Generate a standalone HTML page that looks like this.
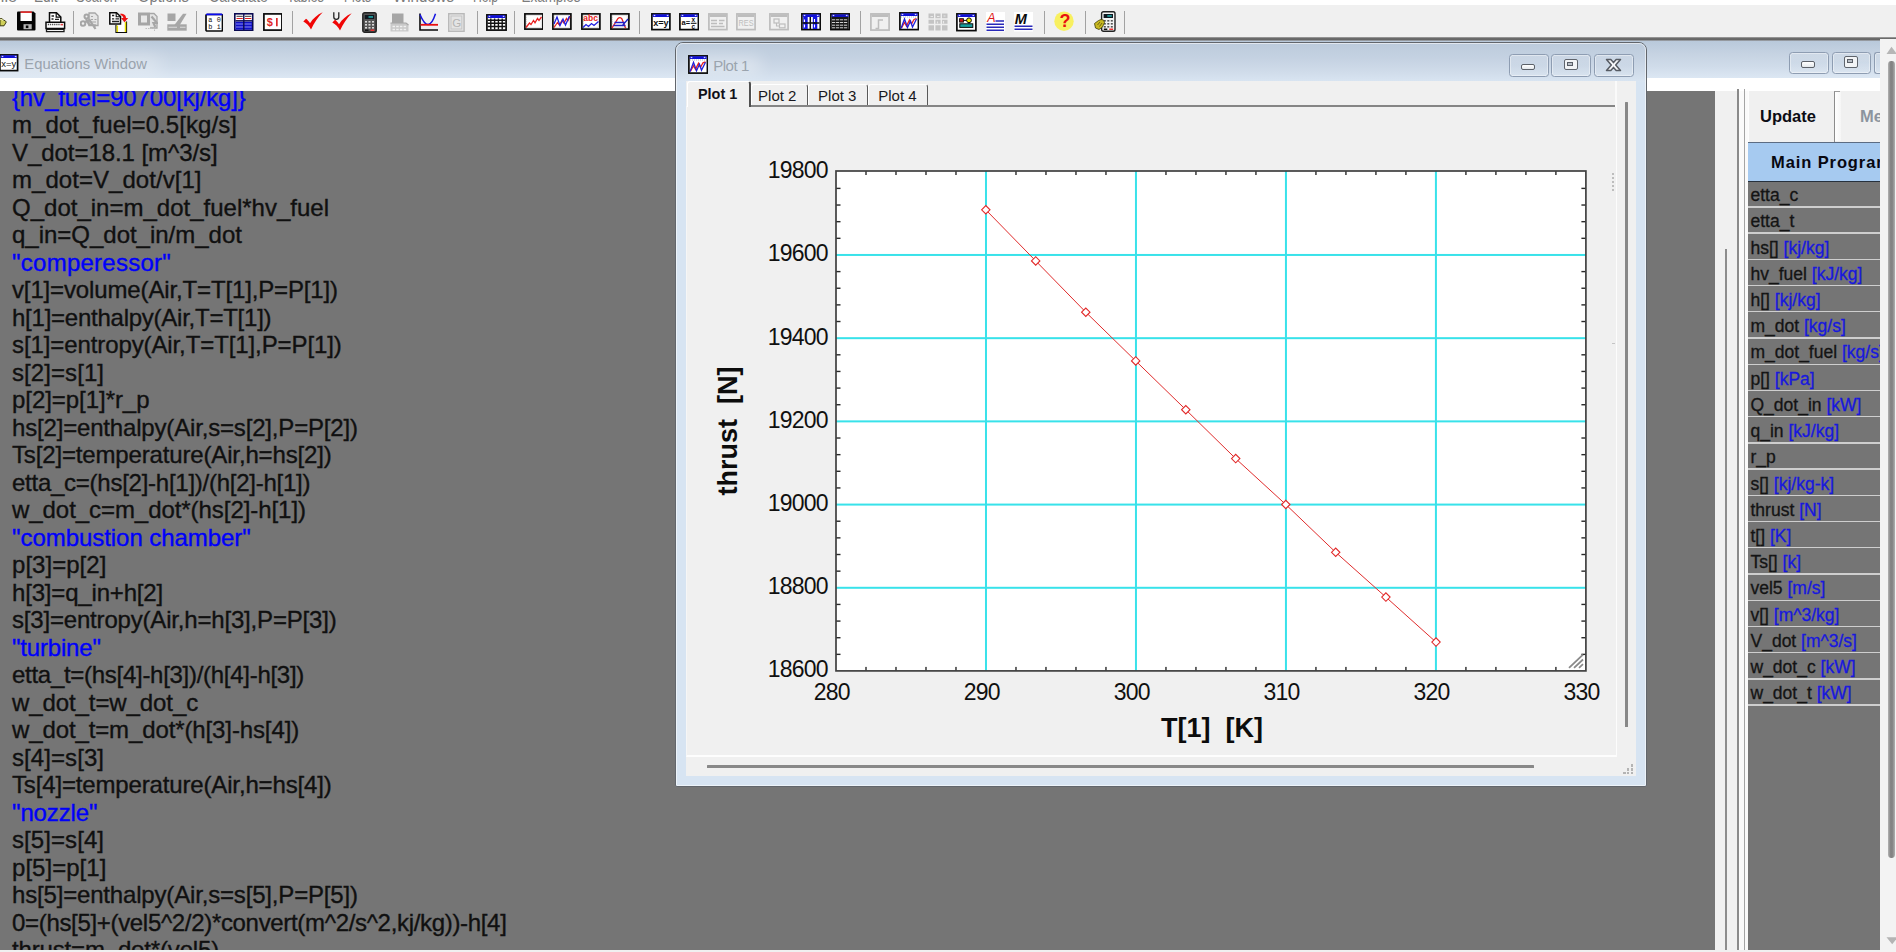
<!DOCTYPE html>
<html><head><meta charset="utf-8"><title>EES</title>
<style>
*{box-sizing:border-box;margin:0;padding:0}
html,body{width:1896px;height:952px;overflow:hidden;background:#757575;font-family:"Liberation Sans",sans-serif;}
.abs{position:absolute}
#menu{left:0;top:0;width:1896px;height:6px;background:#fff;overflow:hidden}
#menu span{position:absolute;top:-14.2px;font-size:17.5px;line-height:18px;color:#6a6a6a;white-space:nowrap;display:block;text-align:justify;text-align-last:justify}
#tb{left:0;top:5px;width:1896px;height:33px;background:#f0f0f0}
#tbline{left:0;top:37px;width:1896px;height:4px;background:linear-gradient(#a8a8a8,#5e5e5e 45%,#6a6a6a 70%,#b4bcc6)}
.sep{position:absolute;top:5px;width:2px;height:24px;border-left:1px solid #a0a0a0;border-right:1px solid #fff}
.ic{position:absolute;top:6px;width:22px;height:22px}
#eqtitle{left:0;top:41px;width:1881px;height:37px;background:linear-gradient(#b9c9db 0%,#c6d3e2 35%,#d0dcea 70%,#dce7f3 100%)}
#eqtitle .t{position:absolute;left:24.3px;top:12.2px;font-size:14.8px;color:#9aa3ad;line-height:22px;white-space:nowrap}
#white{left:0;top:77.5px;width:1881px;height:13px;background:#fff}
#eq{left:0;top:90.5px;width:1715px;height:859.1px;background:#757575;overflow:hidden}
#eqtext{position:absolute;left:12px;top:-7px;font-size:24px;line-height:27.5px;color:#101010;white-space:pre;-webkit-text-stroke:0.35px}
#eqtext .c{color:#0000fa}
#bottom{left:0;top:949.6px;width:1896px;height:3px;background:#f0f0f0}
.wbtn{position:absolute;width:39.6px;height:22px;border:1.2px solid #8e9db2;border-radius:3.5px;background:linear-gradient(rgba(255,255,255,.14),rgba(255,255,255,.02) 50%,rgba(255,255,255,.1));box-shadow:inset 0 0 0 1px rgba(255,255,255,.4)}
</style></head><body>
<div id="menu" class="abs"><svg class="abs" style="left:0;top:0" width="640" height="6" viewBox="0 0 640 6"><text x="-9" y="1.5" font-size="16.5" font-family="Liberation Sans, sans-serif" fill="#7c7c7c" textLength="26" lengthAdjust="spacingAndGlyphs">File</text><text x="34" y="1.5" font-size="16.5" font-family="Liberation Sans, sans-serif" fill="#7c7c7c" textLength="23.5" lengthAdjust="spacingAndGlyphs">Edit</text><text x="76" y="1.5" font-size="16.5" font-family="Liberation Sans, sans-serif" fill="#7c7c7c" textLength="41" lengthAdjust="spacingAndGlyphs">Search</text><text x="138" y="1.5" font-size="16.5" font-family="Liberation Sans, sans-serif" fill="#7c7c7c" textLength="51" lengthAdjust="spacingAndGlyphs">Options</text><text x="209" y="1.5" font-size="16.5" font-family="Liberation Sans, sans-serif" fill="#7c7c7c" textLength="59" lengthAdjust="spacingAndGlyphs">Calculate</text><text x="287" y="1.5" font-size="16.5" font-family="Liberation Sans, sans-serif" fill="#7c7c7c" textLength="37" lengthAdjust="spacingAndGlyphs">Tables</text><text x="344" y="1.5" font-size="16.5" font-family="Liberation Sans, sans-serif" fill="#7c7c7c" textLength="27" lengthAdjust="spacingAndGlyphs">Plots</text><text x="393" y="1.5" font-size="16.5" font-family="Liberation Sans, sans-serif" fill="#7c7c7c" textLength="61" lengthAdjust="spacingAndGlyphs">Windows</text><text x="473" y="1.5" font-size="16.5" font-family="Liberation Sans, sans-serif" fill="#7c7c7c" textLength="25" lengthAdjust="spacingAndGlyphs">Help</text><text x="521.5" y="1.5" font-size="16.5" font-family="Liberation Sans, sans-serif" fill="#7c7c7c" textLength="59" lengthAdjust="spacingAndGlyphs">Examples</text></svg></div><div id="tb" class="abs"></div><div id="tbline" class="abs"></div><div id="eqtitle" class="abs"><div class="abs" style="left:-30px;top:16px;width:190px;height:16px;background:rgba(255,255,255,.38);filter:blur(9px)"></div><div class="t">Equations Window</div></div><div id="white" class="abs"></div><div id="eq" class="abs"><div id="eqtext"><span class="c" style="letter-spacing:-0.144px">{hv_fuel=90700[kj/kg]}</span>
<span style="letter-spacing:0.081px">m_dot_fuel=0.5[kg/s]</span>
<span style="letter-spacing:-0.059px">V_dot=18.1 [m^3/s]</span>
<span style="letter-spacing:0.048px">m_dot=V_dot/v[1]</span>
<span style="letter-spacing:0.004px">Q_dot_in=m_dot_fuel*hv_fuel</span>
<span style="letter-spacing:-0.016px">q_in=Q_dot_in/m_dot</span>
<span class="c" style="letter-spacing:0.255px">"comperessor"</span>
<span style="letter-spacing:-0.140px">v[1]=volume(Air,T=T[1],P=P[1])</span>
<span style="letter-spacing:-0.246px">h[1]=enthalpy(Air,T=T[1])</span>
<span style="letter-spacing:-0.102px">s[1]=entropy(Air,T=T[1],P=P[1])</span>
<span style="letter-spacing:0.079px">s[2]=s[1]</span>
<span style="letter-spacing:-0.050px">p[2]=p[1]*r_p</span>
<span style="letter-spacing:-0.174px">hs[2]=enthalpy(Air,s=s[2],P=P[2])</span>
<span style="letter-spacing:-0.153px">Ts[2]=temperature(Air,h=hs[2])</span>
<span style="letter-spacing:-0.258px">etta_c=(hs[2]-h[1])/(h[2]-h[1])</span>
<span style="letter-spacing:-0.060px">w_dot_c=m_dot*(hs[2]-h[1])</span>
<span class="c" style="letter-spacing:-0.052px">"combustion chamber"</span>
<span style="letter-spacing:0.029px">p[3]=p[2]</span>
<span style="letter-spacing:-0.181px">h[3]=q_in+h[2]</span>
<span style="letter-spacing:-0.184px">s[3]=entropy(Air,h=h[3],P=P[3])</span>
<span class="c" style="letter-spacing:-0.188px">"turbine"</span>
<span style="letter-spacing:-0.284px">etta_t=(hs[4]-h[3])/(h[4]-h[3])</span>
<span style="letter-spacing:-0.095px">w_dot_t=w_dot_c</span>
<span style="letter-spacing:-0.119px">w_dot_t=m_dot*(h[3]-hs[4])</span>
<span style="letter-spacing:0.079px">s[4]=s[3]</span>
<span style="letter-spacing:-0.153px">Ts[4]=temperature(Air,h=hs[4])</span>
<span class="c" style="letter-spacing:-0.128px">"nozzle"</span>
<span style="letter-spacing:0.079px">s[5]=s[4]</span>
<span style="letter-spacing:0.029px">p[5]=p[1]</span>
<span style="letter-spacing:-0.174px">hs[5]=enthalpy(Air,s=s[5],P=P[5])</span>
<span style="letter-spacing:-0.323px">0=(hs[5]+(vel5^2/2)*convert(m^2/s^2,kj/kg))-h[4]</span>
<span style="letter-spacing:-0.161px">thrust=m_dot*(vel5)</span>
</div></div><div id="bottom" class="abs"></div><div class="abs" style="left:1715px;top:90.5px;width:33px;height:859.1px;background:#f0f0f0"></div><div class="abs" style="left:1739px;top:90.5px;width:9px;height:859.1px;background:#fafafa"></div><div class="abs" style="left:1736.7px;top:89px;width:2.3px;height:860.6px;background:#8a8a8a"></div><div class="abs" style="left:1744.2px;top:89px;width:1.2px;height:860.6px;background:#a4a4a4"></div><div class="abs" style="left:1725.2px;top:249px;width:2.3px;height:700.6px;background:#8c8c8c"></div><div class="abs" style="left:1748px;top:90.5px;width:132px;height:859.1px;background:#757575;overflow:hidden"><div class="abs" style="left:0;top:0;width:132px;height:51px;background:#f0f0f0;border-left:1.5px solid #fdfdfd"></div><div class="abs" style="left:86.7px;top:1.7px;width:6.5px;height:49.3px;background:linear-gradient(90deg,#fff,#f6f6f6)"></div><div class="abs" style="left:85.5px;top:0.5px;width:6px;height:51px;border-left:1.2px solid #8c8c8c;border-top:1.2px solid #9c9c9c"></div><div class="abs" style="left:12px;top:15px;font-size:16.5px;font-weight:bold;color:#0c0c14;line-height:20px">Update</div><div class="abs" style="left:112px;top:15px;font-size:16.5px;font-weight:bold;color:#8c949e;line-height:20px;white-space:nowrap">Menu</div><div class="abs" style="left:0;top:51px;width:132px;height:40px;background:#a6caf0;border-top:1.7px solid #5c6c82;border-bottom:1.7px solid #27313d"></div><div class="abs" style="left:23px;top:61px;font-size:16.5px;font-weight:bold;color:#080810;line-height:20px;white-space:nowrap;letter-spacing:0.9px">Main Program</div><div class="abs" style="left:2.5px;top:93.60px;font-size:17.5px;line-height:22px;color:#141414;white-space:nowrap;-webkit-text-stroke:0.3px">etta_c</div><div class="abs" style="left:0;top:115.70px;width:132px;height:1.4px;background:#cecece"></div><div class="abs" style="left:2.5px;top:119.82px;font-size:17.5px;line-height:22px;color:#141414;white-space:nowrap;-webkit-text-stroke:0.3px">etta_t</div><div class="abs" style="left:0;top:141.92px;width:132px;height:1.4px;background:#cecece"></div><div class="abs" style="left:2.5px;top:146.04px;font-size:17.5px;line-height:22px;color:#141414;white-space:nowrap;-webkit-text-stroke:0.3px">hs[] <span style="color:#1818de">[kj/kg]</span></div><div class="abs" style="left:0;top:168.14px;width:132px;height:1.4px;background:#cecece"></div><div class="abs" style="left:2.5px;top:172.26px;font-size:17.5px;line-height:22px;color:#141414;white-space:nowrap;-webkit-text-stroke:0.3px">hv_fuel <span style="color:#1818de">[kJ/kg]</span></div><div class="abs" style="left:0;top:194.36px;width:132px;height:1.4px;background:#cecece"></div><div class="abs" style="left:2.5px;top:198.48px;font-size:17.5px;line-height:22px;color:#141414;white-space:nowrap;-webkit-text-stroke:0.3px">h[] <span style="color:#1818de">[kj/kg]</span></div><div class="abs" style="left:0;top:220.58px;width:132px;height:1.4px;background:#cecece"></div><div class="abs" style="left:2.5px;top:224.70px;font-size:17.5px;line-height:22px;color:#141414;white-space:nowrap;-webkit-text-stroke:0.3px">m_dot <span style="color:#1818de">[kg/s]</span></div><div class="abs" style="left:0;top:246.80px;width:132px;height:1.4px;background:#cecece"></div><div class="abs" style="left:2.5px;top:250.92px;font-size:17.5px;line-height:22px;color:#141414;white-space:nowrap;-webkit-text-stroke:0.3px">m_dot_fuel <span style="color:#1818de">[kg/s]</span></div><div class="abs" style="left:0;top:273.02px;width:132px;height:1.4px;background:#cecece"></div><div class="abs" style="left:2.5px;top:277.14px;font-size:17.5px;line-height:22px;color:#141414;white-space:nowrap;-webkit-text-stroke:0.3px">p[] <span style="color:#1818de">[kPa]</span></div><div class="abs" style="left:0;top:299.24px;width:132px;height:1.4px;background:#cecece"></div><div class="abs" style="left:2.5px;top:303.36px;font-size:17.5px;line-height:22px;color:#141414;white-space:nowrap;-webkit-text-stroke:0.3px">Q_dot_in <span style="color:#1818de">[kW]</span></div><div class="abs" style="left:0;top:325.46px;width:132px;height:1.4px;background:#cecece"></div><div class="abs" style="left:2.5px;top:329.58px;font-size:17.5px;line-height:22px;color:#141414;white-space:nowrap;-webkit-text-stroke:0.3px">q_in <span style="color:#1818de">[kJ/kg]</span></div><div class="abs" style="left:0;top:351.68px;width:132px;height:1.4px;background:#cecece"></div><div class="abs" style="left:2.5px;top:355.80px;font-size:17.5px;line-height:22px;color:#141414;white-space:nowrap;-webkit-text-stroke:0.3px">r_p</div><div class="abs" style="left:0;top:377.90px;width:132px;height:1.4px;background:#cecece"></div><div class="abs" style="left:2.5px;top:382.02px;font-size:17.5px;line-height:22px;color:#141414;white-space:nowrap;-webkit-text-stroke:0.3px">s[] <span style="color:#1818de">[kj/kg-k]</span></div><div class="abs" style="left:0;top:404.12px;width:132px;height:1.4px;background:#cecece"></div><div class="abs" style="left:2.5px;top:408.24px;font-size:17.5px;line-height:22px;color:#141414;white-space:nowrap;-webkit-text-stroke:0.3px">thrust <span style="color:#1818de">[N]</span></div><div class="abs" style="left:0;top:430.34px;width:132px;height:1.4px;background:#cecece"></div><div class="abs" style="left:2.5px;top:434.46px;font-size:17.5px;line-height:22px;color:#141414;white-space:nowrap;-webkit-text-stroke:0.3px">t[] <span style="color:#1818de">[K]</span></div><div class="abs" style="left:0;top:456.56px;width:132px;height:1.4px;background:#cecece"></div><div class="abs" style="left:2.5px;top:460.68px;font-size:17.5px;line-height:22px;color:#141414;white-space:nowrap;-webkit-text-stroke:0.3px">Ts[] <span style="color:#1818de">[k]</span></div><div class="abs" style="left:0;top:482.78px;width:132px;height:1.4px;background:#cecece"></div><div class="abs" style="left:2.5px;top:486.90px;font-size:17.5px;line-height:22px;color:#141414;white-space:nowrap;-webkit-text-stroke:0.3px">vel5 <span style="color:#1818de">[m/s]</span></div><div class="abs" style="left:0;top:509.00px;width:132px;height:1.4px;background:#cecece"></div><div class="abs" style="left:2.5px;top:513.12px;font-size:17.5px;line-height:22px;color:#141414;white-space:nowrap;-webkit-text-stroke:0.3px">v[] <span style="color:#1818de">[m^3/kg]</span></div><div class="abs" style="left:0;top:535.22px;width:132px;height:1.4px;background:#cecece"></div><div class="abs" style="left:2.5px;top:539.34px;font-size:17.5px;line-height:22px;color:#141414;white-space:nowrap;-webkit-text-stroke:0.3px">V_dot <span style="color:#1818de">[m^3/s]</span></div><div class="abs" style="left:0;top:561.44px;width:132px;height:1.4px;background:#cecece"></div><div class="abs" style="left:2.5px;top:565.56px;font-size:17.5px;line-height:22px;color:#141414;white-space:nowrap;-webkit-text-stroke:0.3px">w_dot_c <span style="color:#1818de">[kW]</span></div><div class="abs" style="left:0;top:587.66px;width:132px;height:1.4px;background:#cecece"></div><div class="abs" style="left:2.5px;top:591.78px;font-size:17.5px;line-height:22px;color:#141414;white-space:nowrap;-webkit-text-stroke:0.3px">w_dot_t <span style="color:#1818de">[kW]</span></div><div class="abs" style="left:0;top:613.88px;width:132px;height:1.4px;background:#cecece"></div></div><div class="wbtn" style="left:1789.2px;top:52.2px;height:21.6px"><div class="abs" style="left:11.3px;top:8.0px;width:13.6px;height:6.4px;border:1.5px solid #5c6169;border-radius:2px;background:linear-gradient(#fff,#e4e8ec)"></div></div><div class="wbtn" style="left:1831.5px;top:52.2px;height:21.6px"><div class="abs" style="left:11.500px;top:3.0px;width:14px;height:11.400px;border:1.7px solid #5f646c;border-radius:2px;background:#f2f4f6"><div class="abs" style="left:1.800px;top:1.900px;width:6.400px;height:3.700px;border:1.300px solid #595e66;background:#b8bec6"></div></div></div><div class="wbtn" style="left:1874.3px;top:52.2px;height:21.6px;width:12px;border-right:none;border-radius:3px 0 0 3px"></div><div class="abs" style="left:1880px;top:39.2px;width:16px;height:913px;background:#f3f3f3"></div><div class="abs" style="left:1888.1px;top:60.5px;width:6.8px;height:797.5px;background:linear-gradient(90deg,#b4b4b4,#868686 35%,#828282 60%,#b0b0b0);border-radius:3.4px"></div><svg class="abs" style="left:1884px;top:44px" width="12" height="12"><path d="M2.5 10 L7.5 2.800 L13 10 Z" fill="#b6b6b6"/></svg><svg class="abs" style="left:1884px;top:934px" width="12" height="12"><path d="M2.500 3.200L8.200 10.200L14 3.200Z" fill="#b4b4b4"/></svg><div class="abs" style="left:675.3px;top:42.3px;width:971.5px;height:744.3px;border:1.8px solid #62666c;border-radius:8px 8px 2px 2px;background:#d7e4f2;overflow:hidden"><div class="abs" style="left:0;top:0;width:100%;height:39px;background:linear-gradient(#bccbdc 0%,#c5d2e2 40%,#d0dcea 75%,#d9e5f2 100%)"></div><div class="abs" style="left:0;top:0;width:100%;height:100%;border:1px solid rgba(255,255,255,.55);border-radius:7px 7px 1px 1px"></div></div><div class="abs" style="left:690px;top:57px;width:70px;height:16px;background:rgba(255,255,255,.4);filter:blur(8px)"></div><div class="abs" style="left:713.2px;top:55.3px;font-size:15px;letter-spacing:-0.45px;line-height:22px;color:#9ba4ae;white-space:nowrap">Plot 1</div><div class="wbtn" style="left:1509.1px;top:54.1px;height:22.6px"><div class="abs" style="left:11.3px;top:9.0px;width:13.6px;height:6.4px;border:1.5px solid #5c6169;border-radius:2px;background:linear-gradient(#fff,#e4e8ec)"></div></div><div class="wbtn" style="left:1551.4px;top:54.1px;height:22.6px"><div class="abs" style="left:11.500px;top:4.0px;width:14px;height:11.400px;border:1.7px solid #5f646c;border-radius:2px;background:#f2f4f6"><div class="abs" style="left:1.800px;top:1.900px;width:6.400px;height:3.700px;border:1.300px solid #595e66;background:#b8bec6"></div></div></div><div class="wbtn" style="left:1593.8px;top:54.1px;height:22.6px;width:40px"><svg class="abs" style="left:10.500px;top:3.0px" width="17" height="14" viewBox="0 0 17 14"><path d="M1.500 1.500h4.300L8.500 4.600l2.700-3.100h4.300L10.700 7l4.800 5.500h-4.300L8.500 9.400 5.800 12.500H1.500L6.300 7Z" fill="#f6f7f9" stroke="#565b63" stroke-width="1.500" stroke-linejoin="round"/></svg></div><div class="abs" style="left:686.2px;top:80.8px;width:950.3px;height:695.4px;background:#f0f0f0"></div><div class="abs" style="left:686.2px;top:106px;width:930.5px;height:650.7px;border-right:1.8px solid #fcfcfc;border-bottom:2px solid #fdfdfd;border-left:1.2px solid #f6f6f6"></div><div class="abs" style="left:1614.7px;top:81px;width:2px;height:26px;background:#fafafa"></div><div class="abs" style="left:750px;top:105.2px;width:865px;height:1.8px;background:#858585"></div><div class="abs" style="left:686.5px;top:81.2px;width:64px;height:26px;background:#f0f0f0;border-top:1.5px solid #fff;border-left:1.5px solid #fff;border-right:2.2px solid #505050;border-radius:3px 3px 0 0"></div><div class="abs" style="left:698px;top:84.7px;font-size:14.4px;font-weight:bold;line-height:18px;color:#101018;white-space:nowrap">Plot 1</div><div class="abs" style="left:750.9px;top:84.1px;width:56.8px;height:21.2px;background:#f0f0f0;border-top:1.5px solid #fff;border-left:1.2px solid #fff;border-right:1.9px solid #5a5a5a;border-radius:3px 3px 0 0"></div><div class="abs" style="left:749.2px;width:56.2px;text-align:center;top:87.2px;font-size:15px;line-height:18px;color:#181820;white-space:nowrap">Plot 2</div><div class="abs" style="left:808.1px;top:84.1px;width:59.5px;height:21.2px;background:#f0f0f0;border-top:1.5px solid #fff;border-left:1.2px solid #fff;border-right:1.9px solid #5a5a5a;border-radius:3px 3px 0 0"></div><div class="abs" style="left:807.9px;width:58.8px;text-align:center;top:87.2px;font-size:15px;line-height:18px;color:#181820;white-space:nowrap">Plot 3</div><div class="abs" style="left:867.9px;top:84.1px;width:60.3px;height:21.2px;background:#f0f0f0;border-top:1.5px solid #fff;border-left:1.2px solid #fff;border-right:1.9px solid #5a5a5a;border-radius:3px 3px 0 0"></div><div class="abs" style="left:867.7px;width:59.5px;text-align:center;top:87.2px;font-size:15px;line-height:18px;color:#181820;white-space:nowrap">Plot 4</div><div class="abs" style="left:1625.1px;top:102px;width:2.9px;height:624.5px;background:#888;border-radius:.6px"></div><div class="abs" style="left:706.8px;top:764.9px;width:827px;height:2.8px;background:#888;border-radius:.6px"></div><div class="abs" style="left:1630.6px;top:764.3px;width:2.6px;height:2.6px;background:#b4b4b4"></div><div class="abs" style="left:1626.8px;top:768.0px;width:2.6px;height:2.6px;background:#b4b4b4"></div><div class="abs" style="left:1630.6px;top:768.0px;width:2.6px;height:2.6px;background:#b4b4b4"></div><div class="abs" style="left:1623.0px;top:771.7px;width:2.6px;height:2.6px;background:#b4b4b4"></div><div class="abs" style="left:1626.8px;top:771.7px;width:2.6px;height:2.6px;background:#b4b4b4"></div><div class="abs" style="left:1630.6px;top:771.7px;width:2.6px;height:2.6px;background:#b4b4b4"></div><div class="abs" style="left:1612.3px;top:173px;width:1.6px;height:18px;background:repeating-linear-gradient(#bdbdbd 0 2px,#f0f0f0 2px 4px)"></div><div class="abs" style="left:1611.5px;top:342.5px;width:3px;height:1.4px;background:#c4c4c4"></div><svg class="abs" style="left:0;top:0" width="1896" height="952" viewBox="0 0 1896 952" font-family="Liberation Sans, sans-serif"><rect x="836.0" y="171.0" width="749.9000000000001" height="499.9" fill="#fff"/><rect x="984.98" y="171.0" width="2" height="499.90" fill="#38e2ea"/><rect x="1134.96" y="171.0" width="2" height="499.90" fill="#38e2ea"/><rect x="1284.94" y="171.0" width="2" height="499.90" fill="#38e2ea"/><rect x="1434.92" y="171.0" width="2" height="499.90" fill="#38e2ea"/><rect x="836.0" y="253.96" width="749.90" height="2" fill="#38e2ea"/><rect x="836.0" y="337.17" width="749.90" height="2" fill="#38e2ea"/><rect x="836.0" y="420.38" width="749.90" height="2" fill="#38e2ea"/><rect x="836.0" y="503.58" width="749.90" height="2" fill="#38e2ea"/><rect x="836.0" y="586.79" width="749.90" height="2" fill="#38e2ea"/><rect x="865.30" y="171.0" width="1.4" height="4" fill="#2a2a2a"/><rect x="865.30" y="666.9" width="1.4" height="4" fill="#2a2a2a"/><rect x="895.29" y="171.0" width="1.4" height="4" fill="#2a2a2a"/><rect x="895.29" y="666.9" width="1.4" height="4" fill="#2a2a2a"/><rect x="925.29" y="171.0" width="1.4" height="4" fill="#2a2a2a"/><rect x="925.29" y="666.9" width="1.4" height="4" fill="#2a2a2a"/><rect x="955.28" y="171.0" width="1.4" height="4" fill="#2a2a2a"/><rect x="955.28" y="666.9" width="1.4" height="4" fill="#2a2a2a"/><rect x="1015.28" y="171.0" width="1.4" height="4" fill="#2a2a2a"/><rect x="1015.28" y="666.9" width="1.4" height="4" fill="#2a2a2a"/><rect x="1045.27" y="171.0" width="1.4" height="4" fill="#2a2a2a"/><rect x="1045.27" y="666.9" width="1.4" height="4" fill="#2a2a2a"/><rect x="1075.27" y="171.0" width="1.4" height="4" fill="#2a2a2a"/><rect x="1075.27" y="666.9" width="1.4" height="4" fill="#2a2a2a"/><rect x="1105.26" y="171.0" width="1.4" height="4" fill="#2a2a2a"/><rect x="1105.26" y="666.9" width="1.4" height="4" fill="#2a2a2a"/><rect x="1165.26" y="171.0" width="1.4" height="4" fill="#2a2a2a"/><rect x="1165.26" y="666.9" width="1.4" height="4" fill="#2a2a2a"/><rect x="1195.25" y="171.0" width="1.4" height="4" fill="#2a2a2a"/><rect x="1195.25" y="666.9" width="1.4" height="4" fill="#2a2a2a"/><rect x="1225.25" y="171.0" width="1.4" height="4" fill="#2a2a2a"/><rect x="1225.25" y="666.9" width="1.4" height="4" fill="#2a2a2a"/><rect x="1255.24" y="171.0" width="1.4" height="4" fill="#2a2a2a"/><rect x="1255.24" y="666.9" width="1.4" height="4" fill="#2a2a2a"/><rect x="1315.24" y="171.0" width="1.4" height="4" fill="#2a2a2a"/><rect x="1315.24" y="666.9" width="1.4" height="4" fill="#2a2a2a"/><rect x="1345.23" y="171.0" width="1.4" height="4" fill="#2a2a2a"/><rect x="1345.23" y="666.9" width="1.4" height="4" fill="#2a2a2a"/><rect x="1375.23" y="171.0" width="1.4" height="4" fill="#2a2a2a"/><rect x="1375.23" y="666.9" width="1.4" height="4" fill="#2a2a2a"/><rect x="1405.22" y="171.0" width="1.4" height="4" fill="#2a2a2a"/><rect x="1405.22" y="666.9" width="1.4" height="4" fill="#2a2a2a"/><rect x="1465.22" y="171.0" width="1.4" height="4" fill="#2a2a2a"/><rect x="1465.22" y="666.9" width="1.4" height="4" fill="#2a2a2a"/><rect x="1495.21" y="171.0" width="1.4" height="4" fill="#2a2a2a"/><rect x="1495.21" y="666.9" width="1.4" height="4" fill="#2a2a2a"/><rect x="1525.21" y="171.0" width="1.4" height="4" fill="#2a2a2a"/><rect x="1525.21" y="666.9" width="1.4" height="4" fill="#2a2a2a"/><rect x="1555.20" y="171.0" width="1.4" height="4" fill="#2a2a2a"/><rect x="1555.20" y="666.9" width="1.4" height="4" fill="#2a2a2a"/><rect x="836.0" y="653.66" width="4.5" height="1.4" fill="#2a2a2a"/><rect x="1581.4" y="653.66" width="4.5" height="1.4" fill="#2a2a2a"/><rect x="836.0" y="637.02" width="4.5" height="1.4" fill="#2a2a2a"/><rect x="1581.4" y="637.02" width="4.5" height="1.4" fill="#2a2a2a"/><rect x="836.0" y="620.38" width="4.5" height="1.4" fill="#2a2a2a"/><rect x="1581.4" y="620.38" width="4.5" height="1.4" fill="#2a2a2a"/><rect x="836.0" y="603.73" width="4.5" height="1.4" fill="#2a2a2a"/><rect x="1581.4" y="603.73" width="4.5" height="1.4" fill="#2a2a2a"/><rect x="836.0" y="570.45" width="4.5" height="1.4" fill="#2a2a2a"/><rect x="1581.4" y="570.45" width="4.5" height="1.4" fill="#2a2a2a"/><rect x="836.0" y="553.81" width="4.5" height="1.4" fill="#2a2a2a"/><rect x="1581.4" y="553.81" width="4.5" height="1.4" fill="#2a2a2a"/><rect x="836.0" y="537.17" width="4.5" height="1.4" fill="#2a2a2a"/><rect x="1581.4" y="537.17" width="4.5" height="1.4" fill="#2a2a2a"/><rect x="836.0" y="520.52" width="4.5" height="1.4" fill="#2a2a2a"/><rect x="1581.4" y="520.52" width="4.5" height="1.4" fill="#2a2a2a"/><rect x="836.0" y="487.24" width="4.5" height="1.4" fill="#2a2a2a"/><rect x="1581.4" y="487.24" width="4.5" height="1.4" fill="#2a2a2a"/><rect x="836.0" y="470.60" width="4.5" height="1.4" fill="#2a2a2a"/><rect x="1581.4" y="470.60" width="4.5" height="1.4" fill="#2a2a2a"/><rect x="836.0" y="453.96" width="4.5" height="1.4" fill="#2a2a2a"/><rect x="1581.4" y="453.96" width="4.5" height="1.4" fill="#2a2a2a"/><rect x="836.0" y="437.32" width="4.5" height="1.4" fill="#2a2a2a"/><rect x="1581.4" y="437.32" width="4.5" height="1.4" fill="#2a2a2a"/><rect x="836.0" y="404.03" width="4.5" height="1.4" fill="#2a2a2a"/><rect x="1581.4" y="404.03" width="4.5" height="1.4" fill="#2a2a2a"/><rect x="836.0" y="387.39" width="4.5" height="1.4" fill="#2a2a2a"/><rect x="1581.4" y="387.39" width="4.5" height="1.4" fill="#2a2a2a"/><rect x="836.0" y="370.75" width="4.5" height="1.4" fill="#2a2a2a"/><rect x="1581.4" y="370.75" width="4.5" height="1.4" fill="#2a2a2a"/><rect x="836.0" y="354.11" width="4.5" height="1.4" fill="#2a2a2a"/><rect x="1581.4" y="354.11" width="4.5" height="1.4" fill="#2a2a2a"/><rect x="836.0" y="320.82" width="4.5" height="1.4" fill="#2a2a2a"/><rect x="1581.4" y="320.82" width="4.5" height="1.4" fill="#2a2a2a"/><rect x="836.0" y="304.18" width="4.5" height="1.4" fill="#2a2a2a"/><rect x="1581.4" y="304.18" width="4.5" height="1.4" fill="#2a2a2a"/><rect x="836.0" y="287.54" width="4.5" height="1.4" fill="#2a2a2a"/><rect x="1581.4" y="287.54" width="4.5" height="1.4" fill="#2a2a2a"/><rect x="836.0" y="270.90" width="4.5" height="1.4" fill="#2a2a2a"/><rect x="1581.4" y="270.90" width="4.5" height="1.4" fill="#2a2a2a"/><rect x="836.0" y="237.62" width="4.5" height="1.4" fill="#2a2a2a"/><rect x="1581.4" y="237.62" width="4.5" height="1.4" fill="#2a2a2a"/><rect x="836.0" y="220.98" width="4.5" height="1.4" fill="#2a2a2a"/><rect x="1581.4" y="220.98" width="4.5" height="1.4" fill="#2a2a2a"/><rect x="836.0" y="204.33" width="4.5" height="1.4" fill="#2a2a2a"/><rect x="1581.4" y="204.33" width="4.5" height="1.4" fill="#2a2a2a"/><rect x="836.0" y="187.69" width="4.5" height="1.4" fill="#2a2a2a"/><rect x="1581.4" y="187.69" width="4.5" height="1.4" fill="#2a2a2a"/><rect x="836.0" y="171.0" width="749.9000000000001" height="499.9" fill="none" stroke="#404040" stroke-width="1.7"/><polyline fill="none" stroke="#e02c2c" stroke-width="1" points="985.8,209.8 1035.7,260.9 1085.8,312.2 1135.7,360.9 1185.8,409.7 1235.7,458.6 1285.8,504.5 1335.7,552.3 1385.9,597.1 1436.0,642.1"/><path d="M981.6 209.8L985.8 205.6L990.0 209.8L985.8 214.0Z" fill="#fff" stroke="#e22828" stroke-width="1.1"/><path d="M1031.5 260.9L1035.7 256.7L1039.9 260.9L1035.7 265.1Z" fill="#fff" stroke="#e22828" stroke-width="1.1"/><path d="M1081.6 312.2L1085.8 308.0L1090.0 312.2L1085.8 316.4Z" fill="#fff" stroke="#e22828" stroke-width="1.1"/><path d="M1131.5 360.9L1135.7 356.7L1139.9 360.9L1135.7 365.1Z" fill="#fff" stroke="#e22828" stroke-width="1.1"/><path d="M1181.6 409.7L1185.8 405.5L1190.0 409.7L1185.8 413.9Z" fill="#fff" stroke="#e22828" stroke-width="1.1"/><path d="M1231.5 458.6L1235.7 454.4L1239.9 458.6L1235.7 462.8Z" fill="#fff" stroke="#e22828" stroke-width="1.1"/><path d="M1281.6 504.5L1285.8 500.3L1290.0 504.5L1285.8 508.7Z" fill="#fff" stroke="#e22828" stroke-width="1.1"/><path d="M1331.5 552.3L1335.7 548.1L1339.9 552.3L1335.7 556.5Z" fill="#fff" stroke="#e22828" stroke-width="1.1"/><path d="M1381.7 597.1L1385.9 592.9L1390.1 597.1L1385.9 601.3Z" fill="#fff" stroke="#e22828" stroke-width="1.1"/><path d="M1431.8 642.1L1436.0 637.9L1440.2 642.1L1436.0 646.3Z" fill="#fff" stroke="#e22828" stroke-width="1.1"/><text x="767.8" y="178.1" font-size="23" letter-spacing="-0.8" fill="#101010">19800</text><text x="767.8" y="261.3" font-size="23" letter-spacing="-0.8" fill="#101010">19600</text><text x="767.8" y="344.5" font-size="23" letter-spacing="-0.8" fill="#101010">19400</text><text x="767.8" y="427.7" font-size="23" letter-spacing="-0.8" fill="#101010">19200</text><text x="767.8" y="510.9" font-size="23" letter-spacing="-0.8" fill="#101010">19000</text><text x="767.8" y="594.1" font-size="23" letter-spacing="-0.8" fill="#101010">18800</text><text x="767.8" y="677.3" font-size="23" letter-spacing="-0.8" fill="#101010">18600</text><text x="813.7" y="700.3" font-size="23" letter-spacing="-0.8" fill="#101010">280</text><text x="963.7" y="700.3" font-size="23" letter-spacing="-0.8" fill="#101010">290</text><text x="1113.7" y="700.3" font-size="23" letter-spacing="-0.8" fill="#101010">300</text><text x="1263.6" y="700.3" font-size="23" letter-spacing="-0.8" fill="#101010">310</text><text x="1413.6" y="700.3" font-size="23" letter-spacing="-0.8" fill="#101010">320</text><text x="1563.6" y="700.3" font-size="23" letter-spacing="-0.8" fill="#101010">330</text><text x="1161" y="736.6" font-size="27" font-weight="bold" fill="#0c0c0c" xml:space="preserve">T[1]  [K]</text><text transform="translate(737,495.5) rotate(-90)" font-size="27" font-weight="bold" fill="#0c0c0c" xml:space="preserve">thrust  [N]</text><path d="M1569 667.9L1583 654.700M1574 667.9L1583 659.500M1579 667.9L1583 664.200" stroke="#8a8a8a" stroke-width="1.8" fill="none"/></svg><svg class="abs" style="left:0px;top:17px" width="8" height="10" viewBox="0 0 8 10"><path d="M0 1.500h2l1.800 2h1.200l1.300 1.500l-2.300 3.800H0Z" fill="#cfcf58" stroke="#3a3a10" stroke-width="1"/><path d="M0 2.300h1.800l1.200 1.500" stroke="#f4f4c0" stroke-width="1" fill="none"/></svg><svg class="abs" style="left:16px;top:11px" width="20" height="20" viewBox="0 0 20 20"><path d="M1 1.500Q1 .5 2 .5H17.500L19.500 2.500V18.500Q19.500 19.500 18.500 19.500H2Q1 19.500 1 18.500Z" fill="#050505"/><rect x="4.500" y="1.800" width="11.300" height="8.200" fill="#fff"/><rect x="4.500" y="0.300" width="11.300" height="1.600" fill="#f03030"/><rect x="7.500" y="13.200" width="8.200" height="5" fill="#b8b8b8"/><rect x="9.800" y="14.500" width="2.600" height="2.600" fill="#050505"/></svg><svg class="abs" style="left:45px;top:11.5px" width="21" height="21" viewBox="0 0 21 21"><path d="M4.500 10.500V.8H11.500L15.800 5V10.500" fill="#fff" stroke="#0a0a0a" stroke-width="1.500"/><path d="M11.200 .8V5.200H15.800" fill="none" stroke="#0a0a0a" stroke-width="1.200"/><path d="M6.500 4h2.500M6.500 7h2M10 7.300h4" stroke="#222" stroke-width="1.300"/><path d="M1 10.200H19.600V16.500H1Z" fill="#fff" stroke="#0a0a0a" stroke-width="1.500"/><path d="M2.800 12.500H15" stroke="#555" stroke-width="1.400" stroke-dasharray="1.300 .8"/><rect x="15.500" y="11.800" width="2.500" height="1.600" fill="#e04040"/><path d="M1.500 17.300H19V19.600H1.500Z" fill="#f4f4f4" stroke="#1a1a1a" stroke-width="1.300"/></svg><div class="abs" style="left:73px;top:10.5px;width:1.2px;height:23.5px;background:#a2a2a2"></div><svg class="abs" style="left:80px;top:12px" width="20" height="19" viewBox="0 0 20 19"><path d="M9 1h6l3 3v9.500H9Z" fill="#e6e6e6" stroke="#a6a6a6" stroke-width="1.300"/><path d="M11 4.500h2M11 7.500h2M14.500 7.500h2M11 10h5" stroke="#a6a6a6" stroke-width="1.200"/><circle cx="3" cy="11.500" r="2.300" fill="none" stroke="#a6a6a6" stroke-width="2"/><circle cx="6.500" cy="4.500" r="2" fill="none" stroke="#a6a6a6" stroke-width="2"/><path d="M4.800 10.200L9.500 8L15.500 17M6 7L9 12.500L16 13.500" stroke="#a6a6a6" stroke-width="2.200" fill="none"/></svg><svg class="abs" style="left:109px;top:11.5px" width="21" height="21" viewBox="0 0 21 21"><path d="M7 13V20.500H17.500V9.500" fill="#fff" stroke="#0a0a0a" stroke-width="1.200"/><path d="M8.300 13.500V20M16.500 10V20" stroke="#e8e000" stroke-width="1.500"/><path d="M.8 .8H7.500L11.500 4.500V12H.8Z" fill="#fff" stroke="#0a0a0a" stroke-width="1.500"/><path d="M7.200 .8V4.800H11.500" fill="none" stroke="#0a0a0a" stroke-width="1.100"/><path d="M3 3.500h2.200M3 6.800h2.200M6.500 6.800h3.500M3 9.500h7" stroke="#222" stroke-width="1.300"/><path d="M11.500 1.500c4 .3 5.500 2 5.500 4.500h2.200L15.500 10.200L12 6h2.300c0-1.500-1-2.500-2.800-3Z" fill="#ee1111"/></svg><svg class="abs" style="left:138px;top:12px" width="20" height="21" viewBox="0 0 20 21"><path d="M1.500 2H10.500V12H1.500Z" fill="#e8e8e8" stroke="#a6a6a6" stroke-width="3"/><path d="M12 1.500h4l3 3V16H12" fill="#e4e4e4" stroke="#a6a6a6" stroke-width="1.300"/><path d="M13.500 4.500l5.500 6.500h-3.500l1.800 4" stroke="#a6a6a6" stroke-width="2.200" fill="none"/><path d="M7.500 16.500h9v2.500" fill="none" stroke="#c0c0c0" stroke-width="1" stroke-dasharray="1.500 1"/></svg><svg class="abs" style="left:166.5px;top:12.5px" width="20" height="18" viewBox="0 0 20 18"><path d="M.5 .5H8.500V8H.5Z" fill="#a6a6a6"/><path d="M7 12.500L16 .8h3.600L12.500 12.500Z" fill="#a6a6a6"/><path d="M.3 11.300H19.700V17.700H.3Z" fill="#a6a6a6"/><path d="M1.500 14.300H10M13 14.300H18.500" stroke="#dcdcdc" stroke-width="1.100"/></svg><div class="abs" style="left:195.5px;top:10.5px;width:1.2px;height:23.5px;background:#a2a2a2"></div><svg class="abs" style="left:204.8px;top:12.8px" width="18.5" height="19" viewBox="0 0 18.5 19"><rect x="1" y="1.500" width="16.500" height="16.500" rx="1" fill="#fff" stroke="#0a0a0a" stroke-width="1.700"/><path d="M1 1.500Q1 .4 2.200 .4H16.300Q17.500 .4 17.500 1.500V2.200H1Z" fill="#0a0af0"/><text x="3.200" y="9.300" font-size="6.800" font-family="Liberation Mono" fill="#111">a</text><text x="11.800" y="9.300" font-size="6.800" font-family="Liberation Mono" fill="#111">0</text><text x="3.200" y="16.300" font-size="6.800" font-family="Liberation Mono" fill="#111">b</text><text x="11.800" y="16.300" font-size="6.800" font-family="Liberation Mono" fill="#111">i</text></svg><svg class="abs" style="left:234px;top:12.8px" width="19.5" height="18" viewBox="0 0 19.5 18"><rect x=".8" y=".8" width="17.900" height="16.400" fill="#fff" stroke="#0a0a50" stroke-width="1.600"/><rect x="1.500" y="8.600" width="16.500" height="8" fill="#1010c8"/><path d="M2.500 3.300h6.300M11 3.300h6.300" stroke="#333" stroke-width="1"/><path d="M2.500 5.500h6.300M11 5.500h6.300" stroke="#e02020" stroke-width="1.200"/><path d="M1.500 7.800h16.500" stroke="#0a0a50" stroke-width="1.400"/><path d="M2 11h15.500M2 14h15.500" stroke="#8c8cf4" stroke-width="1.200"/><path d="M9.800 1V17" stroke="#0a0a50" stroke-width="1.400"/></svg><svg class="abs" style="left:262.5px;top:12.8px" width="19.8" height="18" viewBox="0 0 19.8 18"><rect x=".9" y=".9" width="18" height="16.200" fill="#fff" stroke="#0a0a0a" stroke-width="1.700"/><text x="3.800" y="13.200" font-size="11" font-weight="bold" fill="#e02828" font-family="Liberation Sans">$</text><rect x="13" y="5" width="1.700" height="8.300" fill="#e02828"/></svg><div class="abs" style="left:291.5px;top:10.5px;width:1.2px;height:23.5px;background:#a2a2a2"></div><svg class="abs" style="left:303px;top:12px" width="20" height="18" viewBox="0 0 20 18"><path d="M.3 9.600L3 6.800C4.500 7.800 5.800 9.300 7 11.300C10 6.500 14.200 2.800 19.700 .3C15 5 11 11 8 17.400C6.300 14.200 3.500 11.300 .3 9.600Z" fill="#f00505"/></svg><svg class="abs" style="left:332px;top:12px" width="20" height="19" viewBox="0 0 20 19"><g transform="translate(0,1)"><path d="M.3 9.600L3 6.800C4.500 7.800 5.800 9.300 7 11.300C10 6.500 14.200 2.800 19.700 .3C15 5 11 11 8 17.400C6.300 14.200 3.500 11.300 .3 9.600Z" fill="#f00505"/></g><path d="M1.800 .3V5Q1.800 7.300 4.300 7.300Q6.800 7.300 6.800 5V.3" fill="none" stroke="#222" stroke-width="1.300"/></svg><svg class="abs" style="left:362.3px;top:11.5px" width="15" height="21" viewBox="0 0 15 21"><rect x=".8" y=".8" width="13.400" height="19.400" rx="1.800" fill="#555" stroke="#222" stroke-width="1.400"/><rect x="2.800" y="3" width="9.400" height="4" fill="#101820"/><rect x="6.500" y="4.200" width="4.500" height="1.500" fill="#20b0b0"/><g fill="#d8d8d8"><rect x="3" y="9" width="2" height="1.600"/><rect x="6.500" y="9" width="2" height="1.600"/><rect x="10" y="9" width="2" height="1.600"/><rect x="3" y="12" width="2" height="1.600"/><rect x="6.500" y="12" width="2" height="1.600"/><rect x="10" y="12" width="2" height="1.600"/><rect x="3" y="15" width="2" height="1.600"/><rect x="6.500" y="15" width="2" height="1.600"/><rect x="10" y="15" width="2" height="1.600"/></g><rect x="3" y="17.500" width="3.500" height="1.500" fill="#111"/><rect x="8.500" y="17.500" width="3.800" height="1.500" fill="#f03030"/></svg><svg class="abs" style="left:390px;top:12.5px" width="19" height="19" viewBox="0 0 19 19"><rect x="2" y=".5" width="11.500" height="10" fill="#a6a6a6"/><path d="M.5 10H16L18.500 12V18.500H.5Z" fill="#c9c9c9"/><path d="M.5 10H16L18.500 12" fill="none" stroke="#a6a6a6" stroke-width="1.200"/><path d="M2.500 13.500H17M2.500 16.500H17" stroke="#f0f0f0" stroke-width="1.300" stroke-dasharray="2.500 1.200"/></svg><svg class="abs" style="left:418.8px;top:12.5px" width="20" height="18.5" viewBox="0 0 20 18.5"><path d="M1 .5V17H19" fill="none" stroke="#0a0a0a" stroke-width="1.600"/><path d="M1 1.500Q9.500 22 16.500 .8" fill="none" stroke="#1414e0" stroke-width="1.500"/><path d="M1.500 11.800H19" stroke="#e81010" stroke-width="1.800"/></svg><svg class="abs" style="left:447.5px;top:12.5px" width="17" height="19" viewBox="0 0 17 19"><rect x=".7" y=".7" width="15.400" height="17.600" fill="#e4e4e4" stroke="#b9b9b9" stroke-width="1.400"/><rect x="3" y="3" width="10.800" height="13" fill="none" stroke="#c6c6c6" stroke-width="1"/><text x="4.300" y="14" font-size="11.500" fill="#b4b4b4" font-family="Liberation Sans">G</text></svg><div class="abs" style="left:476.7px;top:10.5px;width:1.2px;height:23.5px;background:#a2a2a2"></div><svg class="abs" style="left:486px;top:13.5px" width="21" height="17" viewBox="0 0 21 17"><rect x=".9" y=".9" width="19.200" height="15.200" fill="#fff" stroke="#0a0a0a" stroke-width="1.700"/><rect x="1.700" y="1.200" width="17.600" height="2.800" fill="#1010d8"/><rect x="2.700" y="1.800" width="1.500" height="1.200" fill="#cfcfff"/><rect x="16.800" y="1.800" width="1.500" height="1.200" fill="#cfcfff"/><path d="M1.500 6.200H19.500M1.500 9.300H19.500M1.500 12.400H19.500" stroke="#111" stroke-width="1.500"/><path d="M4.800 4.500V15.500M8.600 4.500V15.500M12.400 4.500V15.500M16.200 4.500V15.500" stroke="#111" stroke-width="1.400"/></svg><div class="abs" style="left:514.2px;top:10.5px;width:1.2px;height:23.5px;background:#a2a2a2"></div><svg class="abs" style="left:523.5px;top:12.8px" width="19.8" height="17" viewBox="0 0 19.8 17"><rect x=".9" y=".9" width="18" height="15.200" fill="#fff" stroke="#0a0a0a" stroke-width="1.700"/><rect x="2.500" y="2.300" width="14.800" height="12.400" fill="none" stroke="#999" stroke-width=".6" stroke-dasharray="1 1"/><path d="M2 14.500L5.500 10L7 11.500L9.500 7.500L11 9.800L13.500 5.500L15 7.500L17.500 4" fill="none" stroke="#e82020" stroke-width="1.300"/></svg><svg class="abs" style="left:552.3px;top:12.8px" width="19.8" height="17" viewBox="0 0 19.8 17"><rect x=".9" y=".9" width="18" height="15.200" fill="#fff" stroke="#0a0a0a" stroke-width="1.700"/><rect x="2.500" y="2.300" width="14.800" height="12.400" fill="none" stroke="#999" stroke-width=".6" stroke-dasharray="1 1"/><path d="M2 14.500L5.500 9.500L7.500 12L10 7.500L12 10L14.500 5.500L16 7.500L18 3.500" fill="none" stroke="#e82020" stroke-width="1.300"/><path d="M2 11L5 4L8 12.500L11 6L13.500 12L17.500 3" fill="none" stroke="#2020e0" stroke-width="1.300"/></svg><svg class="abs" style="left:581.2px;top:12.8px" width="19.8" height="17" viewBox="0 0 19.8 17"><rect x=".9" y=".9" width="18" height="15.200" fill="#fff" stroke="#0a0a0a" stroke-width="1.700"/><rect x="2.500" y="2.300" width="14.800" height="12.400" fill="none" stroke="#999" stroke-width=".6" stroke-dasharray="1 1"/><text x="2.300" y="8" font-size="8.500" font-weight="bold" fill="#e82020" font-family="Liberation Sans">abc</text><path d="M2 14.500L5 11.500L7.500 13.500L10.500 10.500L13 12.500L17.500 8.500" fill="none" stroke="#2020e0" stroke-width="1.300"/></svg><svg class="abs" style="left:610px;top:12.8px" width="19.5" height="17" viewBox="0 0 19.5 17"><rect x=".9" y=".9" width="18" height="15.200" fill="#fff" stroke="#0a0a0a" stroke-width="1.700"/><rect x="2.500" y="2.300" width="14.800" height="12.400" fill="none" stroke="#999" stroke-width=".6" stroke-dasharray="1 1"/><path d="M2 15L8 5.500Q10 3.500 12 6L15.500 15" fill="none" stroke="#e82020" stroke-width="1.300"/><path d="M4.500 9.500H14.500M3.500 12.500H15.500M12 13L18 6" fill="none" stroke="#2020c8" stroke-width="1.300"/></svg><div class="abs" style="left:639px;top:10.5px;width:1.2px;height:23.5px;background:#a2a2a2"></div><svg class="abs" style="left:651px;top:13px" width="19.8" height="17.5" viewBox="0 0 19.8 17.5"><rect x=".9" y=".9" width="18.0" height="15.7" fill="#fff" stroke="#0a0a0a" stroke-width="1.700"/><rect x="1.700" y="1.300" width="16.400000000000002" height="2.700" fill="#1010d8"/><rect x="2.700" y="1.900" width="1.600" height="1.200" fill="#d8d8ff"/><rect x="15.800" y="1.900" width="1.600" height="1.200" fill="#d8d8ff"/><text x="2.200" y="13.300" font-size="9.500" font-weight="bold" fill="#111" font-family="Liberation Sans" textLength="15.500" lengthAdjust="spacingAndGlyphs">x=y</text></svg><svg class="abs" style="left:678.8px;top:13px" width="20.3" height="17.5" viewBox="0 0 20.3 17.5"><rect x=".9" y=".9" width="18.5" height="15.7" fill="#fff" stroke="#0a0a0a" stroke-width="1.700"/><rect x="1.700" y="1.300" width="16.900000000000002" height="2.700" fill="#1010d8"/><rect x="2.700" y="1.900" width="1.600" height="1.200" fill="#d8d8ff"/><rect x="15.800" y="1.900" width="1.600" height="1.200" fill="#d8d8ff"/><text x="2.500" y="12" font-size="7.500" font-weight="bold" fill="#111" font-family="Liberation Sans">a=</text><text x="12.500" y="9.200" font-size="6.500" font-weight="bold" fill="#111" font-family="Liberation Sans">x</text><text x="12.500" y="15.700" font-size="6.500" font-weight="bold" fill="#111" font-family="Liberation Sans">c</text><path d="M11.800 10.300H17.500" stroke="#111" stroke-width="1.100"/></svg><svg class="abs" style="left:708px;top:13px" width="19.8" height="17.5" viewBox="0 0 19.8 17.5"><rect x=".9" y=".9" width="18.0" height="15.7" fill="#f0f0f0" stroke="#bdbdbd" stroke-width="1.700"/><rect x="1.700" y="1.300" width="16.400000000000002" height="2.700" fill="#bdbdbd"/><path d="M3 7.500H9M11 7.500H16.500M3 10.500H9M11 10.500H15M3 13.500H16.500" stroke="#bdbdbd" stroke-width="1.300"/></svg><svg class="abs" style="left:736.4px;top:13px" width="20" height="17.5" viewBox="0 0 20 17.5"><rect x=".9" y=".9" width="18.2" height="15.7" fill="#f0f0f0" stroke="#bdbdbd" stroke-width="1.700"/><rect x="1.700" y="1.300" width="16.6" height="2.700" fill="#bdbdbd"/><text x="2.600" y="13.300" font-size="8.500" fill="#bdbdbd" font-family="Liberation Sans" textLength="15" lengthAdjust="spacingAndGlyphs">RES</text></svg><svg class="abs" style="left:769px;top:13px" width="20" height="17.5" viewBox="0 0 20 17.5"><rect x=".9" y=".9" width="18.2" height="15.7" fill="#f0f0f0" stroke="#bdbdbd" stroke-width="1.700"/><rect x="1.700" y="1.300" width="16.6" height="2.700" fill="#bdbdbd"/><rect x="5" y="6" width="5" height="4" fill="none" stroke="#bdbdbd" stroke-width="1.200"/><rect x="10.500" y="11" width="5.500" height="3.800" fill="none" stroke="#bdbdbd" stroke-width="1.200"/><path d="M7.500 10V13H10.500" fill="none" stroke="#bdbdbd" stroke-width="1.100"/></svg><svg class="abs" style="left:801.2px;top:13px" width="20.2" height="17.5" viewBox="0 0 20.2 17.5"><rect x=".9" y=".9" width="18.4" height="15.7" fill="#fff" stroke="#0a0a0a" stroke-width="1.700"/><rect x="1.700" y="1.300" width="16.8" height="2.700" fill="#1010d8"/><rect x="15.900" y="1.900" width="1.600" height="1.200" fill="#d8d8ff"/><rect x="2.700" y="1.900" width="1.600" height="1.200" fill="#d8d8ff"/><rect x="2.200" y="4" width="4.500" height="12" fill="#1414e0"/><rect x="11.800" y="4" width="4.500" height="12" fill="#1414e0"/><path d="M9.300 4V16M1.500 10H18.500" stroke="#0a0a0a" stroke-width="1.500"/><path d="M3.500 6.500v2.500M13.500 6v3M3.500 11.500v3M13.500 11.500v3" stroke="#fff" stroke-width="1.100"/></svg><svg class="abs" style="left:830px;top:13px" width="20.2" height="17.5" viewBox="0 0 20.2 17.5"><rect x=".9" y=".9" width="18.4" height="15.7" fill="#fff" stroke="#0a0a0a" stroke-width="1.700"/><rect x="1.700" y="1.300" width="16.8" height="2.700" fill="#1010c0"/><rect x="2.700" y="1.900" width="1.600" height="1.200" fill="#d8d8ff"/><rect x="15.900" y="1.900" width="1.600" height="1.200" fill="#d8d8ff"/><rect x="1.700" y="4" width="16.800" height="12" fill="#181818"/><path d="M2 6.800H18M2 9.500H18M2 12.200H18M2 14.800H18" stroke="#e8e8e8" stroke-width=".9" stroke-dasharray="3.200 .8"/></svg><div class="abs" style="left:860.2px;top:10.5px;width:1.2px;height:23.5px;background:#a2a2a2"></div><svg class="abs" style="left:870px;top:13px" width="20" height="18" viewBox="0 0 20 18"><rect x=".9" y=".9" width="18.2" height="16.2" fill="#f0f0f0" stroke="#bdbdbd" stroke-width="1.700"/><rect x="1.700" y="1.300" width="16.6" height="2.700" fill="#bdbdbd"/><path d="M5.500 15.500H8.500V7H13" fill="none" stroke="#bdbdbd" stroke-width="1.500"/></svg><svg class="abs" style="left:898.8px;top:12px" width="20.3" height="18.5" viewBox="0 0 20.3 18.5"><rect x=".9" y=".9" width="18.5" height="16.7" fill="#fff" stroke="#0a0a0a" stroke-width="1.700"/><rect x="1.700" y="1.300" width="16.900000000000002" height="2.700" fill="#1010d8"/><rect x="2.700" y="1.900" width="1.600" height="1.200" fill="#d8d8ff"/><rect x="15.800" y="1.900" width="1.600" height="1.200" fill="#d8d8ff"/><path d="M2 5H18" stroke="#9ab" stroke-width=".8" stroke-dasharray="1 1"/><g transform="translate(0,1.500)"><path d="M2.500 14.500L5.500 9L7.500 12.500L10.500 6.500L12.500 10.500L15 6L17.500 5" fill="none" stroke="#e82020" stroke-width="1.300"/><path d="M2 15L5.500 5.500L8.500 14L11.500 7.500L13.500 13.500L17.500 5.500" fill="none" stroke="#2020d8" stroke-width="1.300"/></g></svg><svg class="abs" style="left:928px;top:13px" width="20" height="18" viewBox="0 0 20 18"><rect x=".5" y=".5" width="19" height="17" fill="#c4c4c4"/><path d="M0 6H20M0 11.500H20M6.700 0V18M13.300 0V18" stroke="#efefef" stroke-width="1.400"/><path d="M2.500 3.500h2.500M9 3.500h2.500M15.500 3h2M9.500 8.500v2M15.500 8v2.500" stroke="#e8e8e8" stroke-width="1.200"/></svg><svg class="abs" style="left:956px;top:13px" width="20.8" height="18.5" viewBox="0 0 20.8 18.5"><rect x=".9" y=".9" width="19.0" height="16.7" fill="#fff" stroke="#0a0a0a" stroke-width="1.700"/><rect x="1.700" y="1.300" width="17.400000000000002" height="2.700" fill="#1010d8"/><rect x="2.700" y="1.900" width="1.600" height="1.200" fill="#d8d8ff"/><rect x="16.500" y="1.900" width="1.600" height="1.200" fill="#d8d8ff"/><rect x="3.800" y="10.800" width="13" height="3.600" fill="#18a0a0" stroke="#0a0a0a" stroke-width="1"/><circle cx="13" cy="7.300" r="2.400" fill="#f0e800" stroke="#0a0a0a" stroke-width="1"/><rect x="3.600" y="5.700" width="3.800" height="3.400" fill="#d01818" stroke="#0a0a0a" stroke-width=".9"/><path d="M7.400 7.400H10.600M13 9.700V10.800" stroke="#0a0a0a" stroke-width="1"/></svg><svg class="abs" style="left:986px;top:12px" width="19" height="19.5" viewBox="0 0 19 19.5"><rect x="0" y="0" width="19" height="19.500" fill="#fff"/><text x="1.300" y="10" font-size="12.500" font-style="italic" fill="#e01818" font-family="Liberation Sans">A</text><path d="M9.500 9H18M.5 12.200H18M.5 15.200H18M.5 18.200H18" stroke="#2828b8" stroke-width="1.400"/></svg><svg class="abs" style="left:1014.2px;top:12px" width="19" height="19.5" viewBox="0 0 19 19.5"><rect x="0" y="0" width="19" height="19.500" fill="#fff"/><text x=".8" y="11.500" font-size="14.500" font-style="italic" font-weight="bold" fill="#0a0a0a" font-family="Liberation Sans">M</text><path d="M.5 14.300H18.500M.5 17.300H18.500" stroke="#2828b8" stroke-width="1.400"/></svg><div class="abs" style="left:1044.2px;top:10.5px;width:1.2px;height:23.5px;background:#a2a2a2"></div><svg class="abs" style="left:1054.4px;top:11px" width="20" height="20.5" viewBox="0 0 20 20.5"><circle cx="10" cy="10.200" r="9.700" fill="#f8f060"/><text x="5.400" y="16.400" font-size="18" font-weight="bold" fill="#e81010" font-family="Liberation Sans">?</text></svg><div class="abs" style="left:1085px;top:10.5px;width:1.2px;height:23.5px;background:#a2a2a2"></div><svg class="abs" style="left:1094px;top:11.3px" width="22" height="21" viewBox="0 0 22 21"><g transform="translate(6.800,0)"><rect x=".8" y=".8" width="13.400" height="19.400" rx="1.800" fill="#f4f4f4" stroke="#222" stroke-width="1.400"/><rect x="2.800" y="3" width="9.400" height="4" fill="#101820"/><rect x="6.500" y="4.200" width="4.500" height="1.500" fill="#20b0b0"/><g fill="#555"><rect x="3" y="9" width="2" height="1.600"/><rect x="6.500" y="9" width="2" height="1.600"/><rect x="10" y="9" width="2" height="1.600"/><rect x="3" y="12" width="2" height="1.600"/><rect x="6.500" y="12" width="2" height="1.600"/><rect x="10" y="12" width="2" height="1.600"/><rect x="3" y="15" width="2" height="1.600"/><rect x="6.500" y="15" width="2" height="1.600"/><rect x="10" y="15" width="2" height="1.600"/></g><rect x="3" y="17.500" width="3.500" height="1.500" fill="#111"/><rect x="8.500" y="17.500" width="3.800" height="1.500" fill="#f03030"/></g><path d="M.5 12.500L4.500 9.500L7 8.500L9.500 9L10.500 11.500L8.500 16L5 18.500L1.500 17Z" fill="#c8b820" stroke="#40400a" stroke-width=".8"/><path d="M6 11L3.500 14M8 12L5.500 15.500" stroke="#5a5010" stroke-width=".8"/></svg><div class="abs" style="left:1124.2px;top:10.5px;width:1.2px;height:23.5px;background:#a2a2a2"></div><svg class="abs" style="left:-0.8px;top:54.3px" width="19.5" height="17.5" viewBox="0 0 19.5 17.5"><rect x=".9" y=".9" width="17.7" height="15.7" fill="#fff" stroke="#0a0a0a" stroke-width="1.700"/><rect x="1.700" y="1.300" width="16.1" height="2.700" fill="#1010d8"/><rect x="2.700" y="1.900" width="1.600" height="1.200" fill="#d8d8ff"/><rect x="15.800" y="1.900" width="1.600" height="1.200" fill="#d8d8ff"/><text x="2.300" y="13.300" font-size="9.300" fill="#111" font-family="Liberation Sans" textLength="15" lengthAdjust="spacingAndGlyphs">x=y</text></svg><svg class="abs" style="left:687.8px;top:55.2px" width="20.3" height="19" viewBox="0 0 20.3 19"><rect x=".9" y=".9" width="18.5" height="17.2" fill="#fff" stroke="#0a0a0a" stroke-width="1.700"/><rect x="1.700" y="1.300" width="16.900000000000002" height="2.700" fill="#1010d8"/><rect x="2.700" y="1.900" width="1.600" height="1.200" fill="#d8d8ff"/><rect x="15.800" y="1.900" width="1.600" height="1.200" fill="#d8d8ff"/><path d="M2 5H18" stroke="#9ab" stroke-width=".8" stroke-dasharray="1 1"/><g transform="translate(0,1.800)"><path d="M2.500 14.500L5.500 9L7.500 12.500L10.500 6.500L12.500 10.500L15 6L17.500 5" fill="none" stroke="#e82020" stroke-width="1.300"/><path d="M2 15L5.500 5.500L8.500 14L11.500 7.500L13.500 13.500L17.500 5.500" fill="none" stroke="#2020d8" stroke-width="1.300"/></g></svg></body></html>
